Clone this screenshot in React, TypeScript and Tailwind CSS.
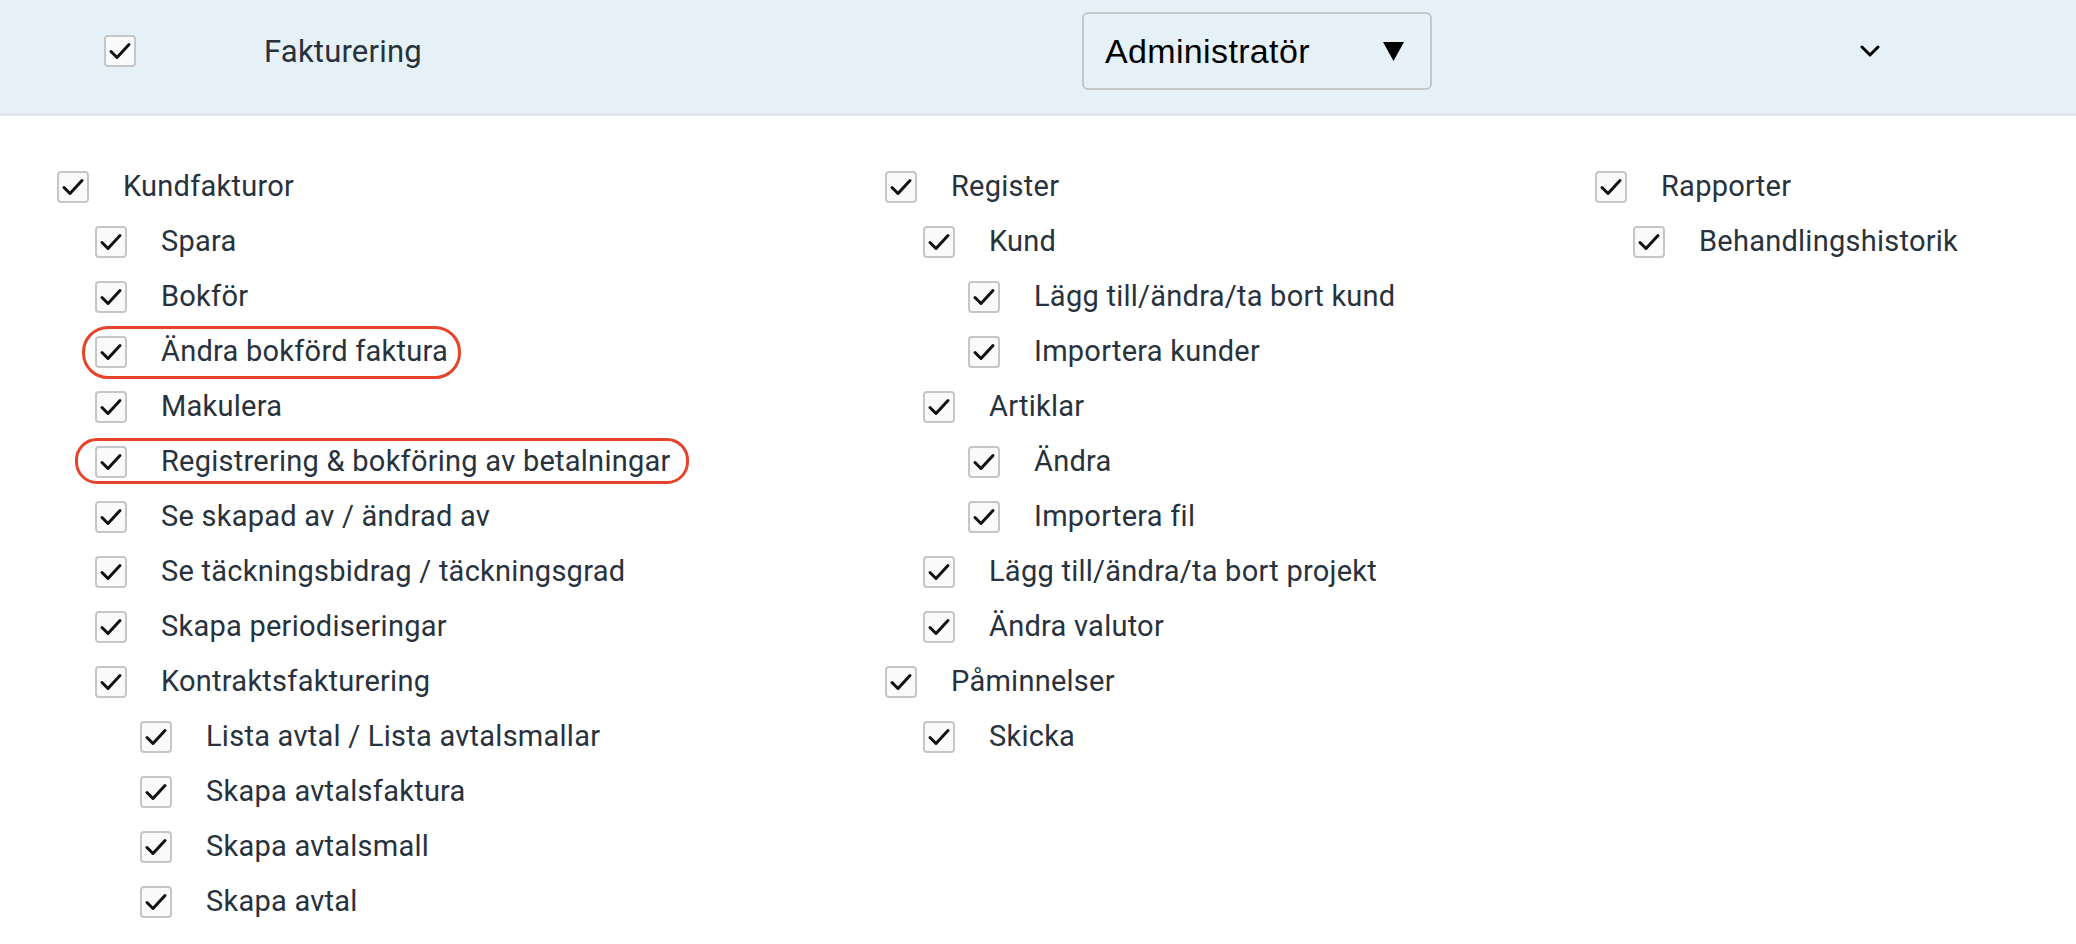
type Item = { label: string; level: 0 | 1 | 2; mark?: "a" | "b" };

const columns: Item[][] = [
  [
    { label: "Kundfakturor", level: 0 },
    { label: "Spara", level: 1 },
    { label: "Bokför", level: 1 },
    { label: "Ändra bokförd faktura", level: 1, mark: "a" },
    { label: "Makulera", level: 1 },
    { label: "Registrering & bokföring av betalningar", level: 1, mark: "b" },
    { label: "Se skapad av / ändrad av", level: 1 },
    { label: "Se täckningsbidrag / täckningsgrad", level: 1 },
    { label: "Skapa periodiseringar", level: 1 },
    { label: "Kontraktsfakturering", level: 1 },
    { label: "Lista avtal / Lista avtalsmallar", level: 2 },
    { label: "Skapa avtalsfaktura", level: 2 },
    { label: "Skapa avtalsmall", level: 2 },
    { label: "Skapa avtal", level: 2 },
  ],
  [
    { label: "Register", level: 0 },
    { label: "Kund", level: 1 },
    { label: "Lägg till/ändra/ta bort kund", level: 2 },
    { label: "Importera kunder", level: 2 },
    { label: "Artiklar", level: 1 },
    { label: "Ändra", level: 2 },
    { label: "Importera fil", level: 2 },
    { label: "Lägg till/ändra/ta bort projekt", level: 1 },
    { label: "Ändra valutor", level: 1 },
    { label: "Påminnelser", level: 0 },
    { label: "Skicka", level: 1 },
  ],
  [
    { label: "Rapporter", level: 0 },
    { label: "Behandlingshistorik", level: 1 },
  ],
];

function Checkbox() {
  return (
    <span className="flex h-[32px] w-[32px] shrink-0 items-center justify-center rounded-[4px] border-2 border-[#c4c6c8] bg-[#fafafa]">
      <svg width="28" height="28" viewBox="0 0 28 28" fill="none">
        <polyline
          points="5,14.5 11,20.5 23,7.5"
          stroke="#111"
          strokeWidth="3"
          strokeLinecap="round"
          strokeLinejoin="round"
        />
      </svg>
    </span>
  );
}

function Row({ item }: { item: Item }) {
  const indent = item.level === 0 ? "ml-0" : item.level === 1 ? "ml-[38px]" : "ml-[83px]";
  return (
    <div className={`relative flex h-[55px] w-fit items-center ${indent}`}>
      <Checkbox />
      <span className="ml-[34px] whitespace-nowrap text-[29px] leading-none tracking-[0.25px] text-[#28323c]">
        {item.label}
      </span>
      {item.mark === "a" && (
        <span className="pointer-events-none absolute -left-[13px] -right-[13px] top-[2px] bottom-0 rounded-[26px] border-[3px] border-[#e5432b]" />
      )}
      {item.mark === "b" && (
        <span className="pointer-events-none absolute -left-[20px] -right-[18px] top-[4px] bottom-[5px] rounded-[22px] border-[3px] border-[#e5432b]" />
      )}
    </div>
  );
}

export default function App() {
  return (
    <div className="min-h-screen bg-white font-['Roboto',sans-serif]">
      {/* Section header */}
      <div className="flex h-[116px] items-center border-b-[3px] border-[#e1e5e8] bg-[#e6f1f7] pb-[11px]">
        <div className="flex w-[1082px] items-center pl-[104px]">
          <Checkbox />
          <span className="ml-[128px] text-[31px] leading-none tracking-[0.2px] text-[#28323c]">Fakturering</span>
        </div>
        <div className="flex h-[78px] w-[350px] items-center justify-between rounded-[6px] border-2 border-[#c3c7ca] pl-[21px] pr-[26px]">
          <span className="font-['Liberation_Sans',sans-serif] text-[34px] leading-none tracking-[0.35px] text-black">
            Administratör
          </span>
          <svg width="21" height="19" viewBox="0 0 21 19">
            <polygon points="0,0 21,0 10.5,19" fill="#000" />
          </svg>
        </div>
        <div className="ml-[428px] flex h-[20px] w-[20px] items-center justify-center">
          <svg width="20" height="14" viewBox="0 0 20 14" fill="none">
            <polyline points="2,3 10,11 18,3" stroke="#000" strokeWidth="3" strokeLinecap="round" strokeLinejoin="round" />
          </svg>
        </div>
      </div>

      {/* Permissions */}
      <div className="grid grid-cols-[828px_710px_1fr] pl-[57px] pt-[43px]">
        {columns.map((col, i) => (
          <div key={i} className="flex flex-col">
            {col.map((item) => (
              <Row key={item.label} item={item} />
            ))}
          </div>
        ))}
      </div>
    </div>
  );
}
